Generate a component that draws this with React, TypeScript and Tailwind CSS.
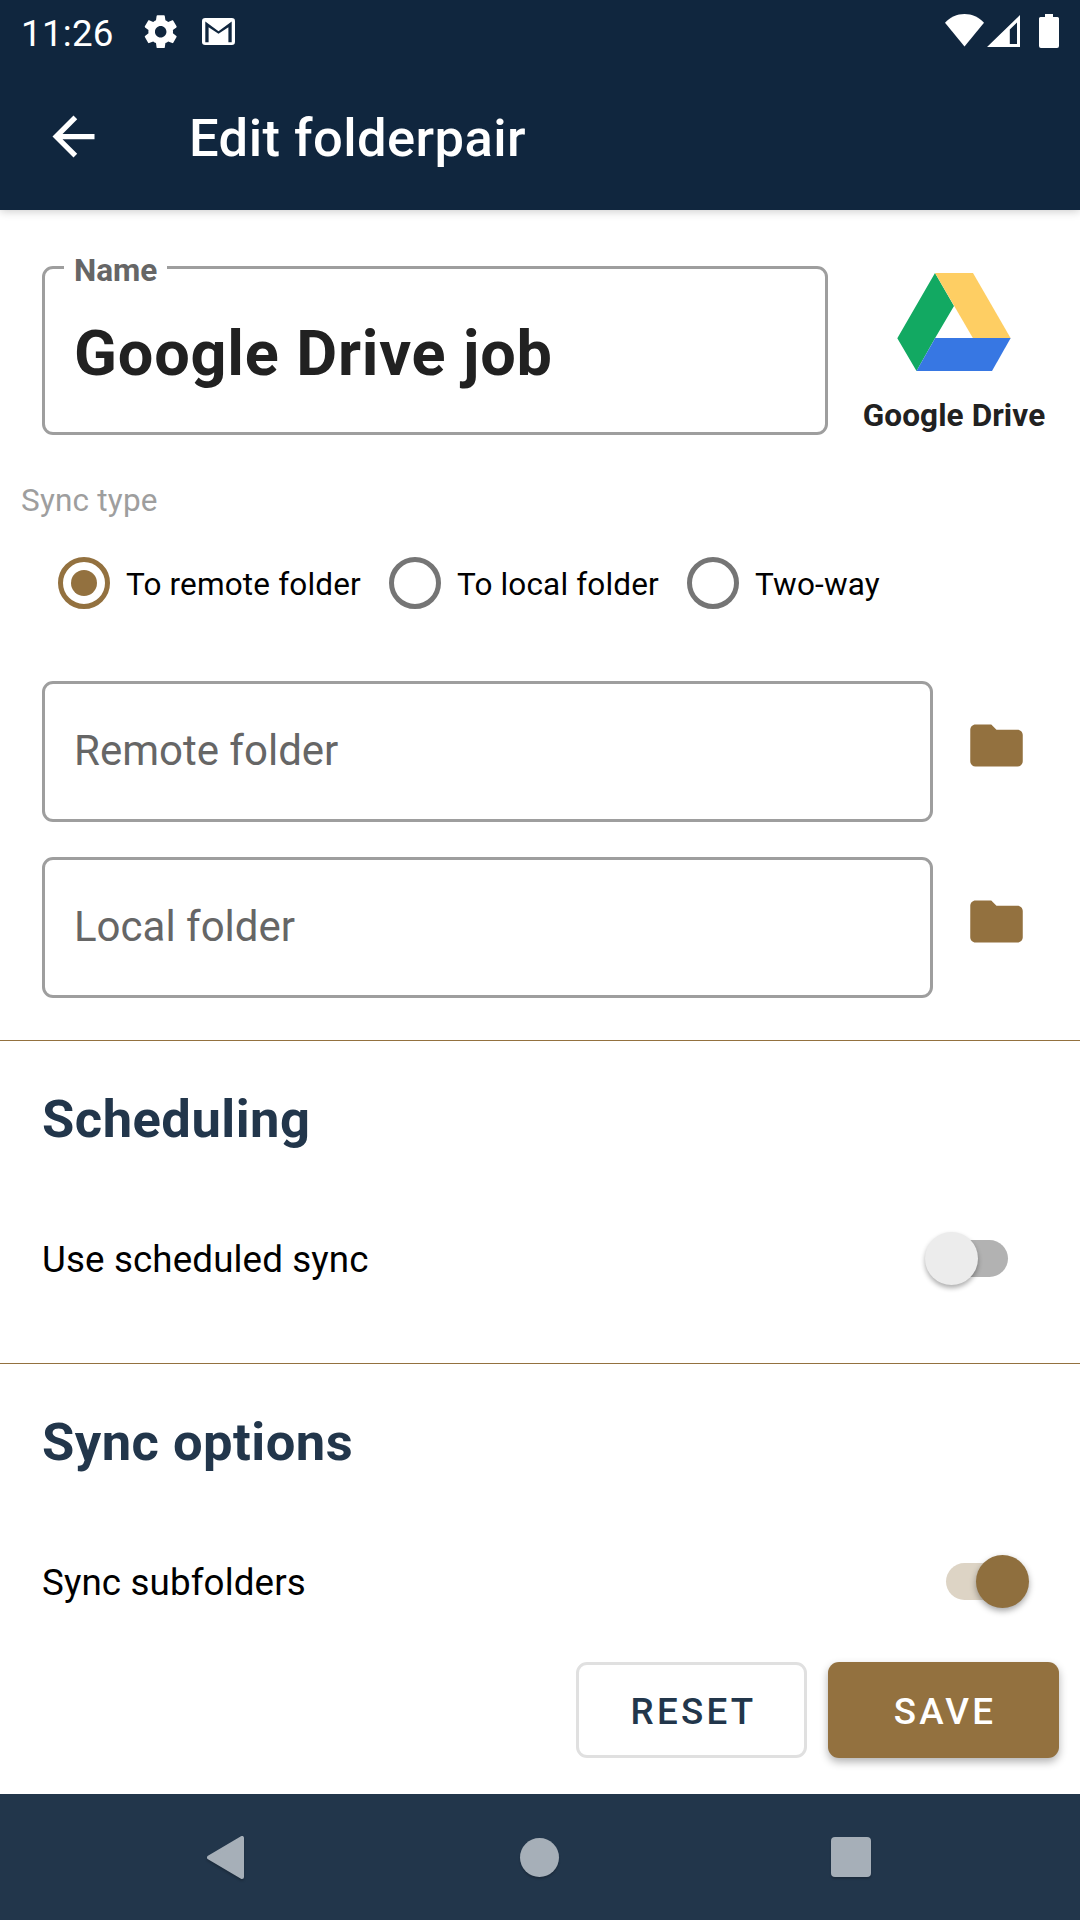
import React from "react";

function StatusBar() {
  return (
    <div className="flex h-[63px] items-start justify-between">
      <div className="flex">
        <span className="ml-[21px] mt-[2px] w-[120px] text-[36.75px] leading-[64px] tracking-[0.25px] text-white">11:26</span>
        <svg className="mt-[12px] size-[39.4px]" viewBox="0 0 24 24" fill="#fff">
          <path d="M19.43 12.98c.04-.32.07-.64.07-.98s-.03-.66-.07-.98l2.11-1.65c.19-.15.24-.42.12-.64l-2-3.46c-.12-.22-.39-.3-.61-.22l-2.49 1c-.52-.4-1.08-.73-1.69-.98l-.38-2.65C14.46 2.18 14.25 2 14 2h-4c-.25 0-.46.18-.49.42l-.38 2.65c-.61.25-1.17.59-1.69.98l-2.49-1c-.23-.09-.49 0-.61.22l-2 3.46c-.13.22-.07.49.12.64l2.11 1.65c-.04.32-.07.65-.07.98s.03.66.07.98l-2.11 1.65c-.19.15-.24.42-.12.64l2 3.46c.12.22.39.3.61.22l2.49-1c.52.4 1.08.73 1.69.98l.38 2.65c.03.24.24.42.49.42h4c.25 0 .46-.18.49-.42l.38-2.65c.61-.25 1.17-.59 1.69-.98l2.49 1c.23.09.49 0 .61-.22l2-3.46c.12-.22.07-.49-.12-.64l-2.11-1.65zM12 15.5c-1.93 0-3.5-1.57-3.5-3.5s1.57-3.5 3.5-3.5 3.5 1.57 3.5 3.5-1.57 3.5-3.5 3.5z" />
        </svg>
        <svg className="ml-[22px] mt-[18px] h-[27px] w-[33px]" viewBox="0 0 33 27">
          <rect width="33" height="27" rx="3.2" fill="#fff" />
          <path d="M3.300 24.200V3.600L16.500 13.300L29.700 3.600V24.200H26.400V9.200L16.500 15.800L6.600 9.200V24.200Z" fill="#10263e" />
          <path d="M6 3.300H27L16.500 11Z" fill="#fff" />
        </svg>
      </div>
      <div className="mr-[21px] mt-[14px] flex">
        <svg className="h-[33px] w-[39px]" viewBox="0 0 39 33" fill="#fff">
          <path d="M0 8.8C5.2 3.2 12 0 19.5 0S33.800 3.200 39 8.800L19.500 32.500Z" />
        </svg>
        <svg className="ml-[3px] mt-[1px] h-[32px] w-[33px]" viewBox="0 0 33 32" fill="#fff">
          <path fillRule="evenodd" d="M33 0V32H0ZM30 7.500L22.800 14.400V29H30Z" />
        </svg>
        <svg className="ml-[19px] h-[34px] w-[20px]" viewBox="0 0 20 34" fill="#fff">
          <path d="M6 0H14V3H18.500Q20 3 20 4.500V32Q20 34 18 34H2Q0 34 0 32V4.500Q0 3 1.500 3H6Z" />
        </svg>
      </div>
    </div>
  );
}

function Header() {
  return (
    <header className="z-10 h-[210px] bg-[#10263e] shadow-[0_1px_9px_rgba(0,0,0,0.22)]">
      <StatusBar />
      <div className="flex h-[147px] items-center pl-[42px]">
        <svg className="size-[63px]" viewBox="0 0 24 24" fill="#fff">
          <path d="M20 11H7.830l5.590-5.590L12 4l-8 8 8 8 1.410-1.410L7.830 13H20v-2z" />
        </svg>
        <h1 className="ml-[84px] pt-[2px] text-[52.5px] font-medium leading-[62px] tracking-[0.45px] text-white">Edit folderpair</h1>
      </div>
    </header>
  );
}

function DriveLogo() {
  return (
    <svg className="h-[98px] w-[114px]" viewBox="0 0 114 98">
      <path d="M38 0L57 33L38 65.300L19.500 98L0.300 65.300Z" fill="#12a962" />
      <path d="M38 0H76L113.700 65.300H76Z" fill="#fece63" />
      <path d="M38.200 65H113.700L95 98H19.500Z" fill="#3777e3" />
    </svg>
  );
}

function Radio({ label, checked = false, className }: { label: string; checked?: boolean; className: string }) {
  return (
    <label className={`flex items-center ${className}`}>
      <span
        className={`flex size-[52px] items-center justify-center rounded-full border-[5px] ${
          checked ? "border-[#93713f]" : "border-[#757575]"
        }`}
      >
        {checked && <span className="size-[26px] rounded-full bg-[#93713f]" />}
      </span>
      <span className="ml-[16px] whitespace-nowrap pt-[4px] text-[31.5px] leading-[38px] tracking-[0.16px] text-black">{label}</span>
    </label>
  );
}

function FolderField({ label, className }: { label: string; className: string }) {
  return (
    <div className={`flex h-[141px] ${className}`}>
      <div className="ml-[42px] flex w-[891px] items-center rounded-[11px] border-[3px] border-[#9e9e9e] pb-[2px] pl-[29px] text-[42px] leading-[50px] text-[#666]">
        <span>{label}</span>
      </div>
      <svg className="ml-[32px] mt-[33px] size-[63px]" viewBox="0 0 24 24" fill="#93713f">
        <path d="M10 4H4c-1.100 0-1.990.9-1.990 2L2 18c0 1.100.9 2 2 2h16c1.100 0 2-.9 2-2V8c0-1.100-.9-2-2-2h-8l-2-2z" />
      </svg>
    </div>
  );
}

function Switch({ on }: { on: boolean }) {
  return on ? (
    <span className="relative mr-[51px] flex h-[53px] w-[83px] items-center">
      <span className="h-[37px] w-[70px] rounded-full bg-[#ddd4c5]" />
      <span className="absolute right-0 size-[53px] rounded-full bg-[#8f6f3e] shadow-[0_3px_6px_rgba(0,0,0,0.35)]" />
    </span>
  ) : (
    <span className="relative mr-[72px] flex h-[53px] w-[83px] items-center justify-end">
      <span className="h-[37px] w-[70px] rounded-full bg-[#b2b2b2]" />
      <span className="absolute left-0 size-[53px] rounded-full bg-[#ececec] shadow-[0_3px_5px_rgba(0,0,0,0.32)]" />
    </span>
  );
}

function Section({ title, option, on }: { title: string; option: string; on: boolean }) {
  return (
    <section className="h-[323px] border-t border-[#93713f]">
      <h2 className="ml-[42px] mt-[47px] text-[52.5px] font-bold leading-[62px] tracking-[0.48px] text-[#22364b]">{title}</h2>
      <div className="mt-[82px] flex h-[53px] items-center justify-between pl-[42px]">
        <span className="pt-[3px] text-[36.75px] leading-[44px] tracking-[0.12px] text-black">{option}</span>
        <Switch on={on} />
      </div>
    </section>
  );
}

function NavBar() {
  return (
    <nav className="flex h-[126px] items-center justify-between bg-[#22364b] pl-[207px] pr-[209px]">
      <svg className="h-[43px] w-[38px] drop-shadow-[0_2px_1px_rgba(0,0,0,0.2)]" viewBox="0 0 38 43">
        <path d="M2 21.500L35 2V41Z" fill="#a6afb8" stroke="#a6afb8" strokeWidth="4" strokeLinejoin="round" />
      </svg>
      <span className="ml-[3px] size-[39px] rounded-full bg-[#a6afb8] shadow-[0_2px_2px_rgba(0,0,0,0.2)]" />
      <span className="h-[40px] w-[40px] rounded-[4px] bg-[#a6afb8] shadow-[0_2px_2px_rgba(0,0,0,0.2)]" />
    </nav>
  );
}

export default function App() {
  return (
    <div className="flex h-[1920px] w-[1080px] flex-col overflow-hidden bg-white font-[Roboto,sans-serif]">
      <Header />
      <main className="flex h-[1584px] flex-col overflow-hidden">
        <div className="mt-[56px] flex h-[169px]">
          <div className="relative ml-[42px] w-[786px] rounded-[11px] border-[3px] border-[#9e9e9e] pl-[29px] pt-[47px]">
            <span className="absolute left-[19px] top-[-17px] bg-white pl-[10px] pr-[10px] text-[31.5px] font-bold leading-[38px] text-[#666]">
              Name
            </span>
            <span className="block text-[63px] font-bold leading-[75px] tracking-[0.82px] text-[#212121]">Google Drive job</span>
          </div>
          <div className="ml-[21px] mt-[7px] flex w-[210px] flex-col items-center">
            <DriveLogo />
            <span className="mt-[26px] whitespace-nowrap text-[31.5px] font-bold leading-[38px] tracking-[0.1px] text-[#212121]">
              Google Drive
            </span>
          </div>
        </div>
        <div className="ml-[21px] mt-[47px] text-[31.5px] leading-[38px] tracking-[0.2px] text-[#9e9e9e]">Sync type</div>
        <div className="mt-[37px] flex h-[52px]">
          <Radio label="To remote folder" checked className="ml-[58px] w-[331px]" />
          <Radio label="To local folder" className="w-[298px]" />
          <Radio label="Two-way" className="" />
        </div>
        <FolderField label="Remote folder" className="mt-[72px]" />
        <FolderField label="Local folder" className="mt-[35px]" />
        <div className="mt-[42px]">
          <Section title="Scheduling" option="Use scheduled sync" on={false} />
          <Section title="Sync options" option="Sync subfolders" on />
        </div>
      </main>
      <div className="z-10 -mt-[132px] flex h-[132px] justify-end gap-[21px] pr-[21px]">
        <button className="h-[96px] w-[231px] rounded-[11px] border-[3px] border-[#e0e0e0] bg-white pl-[4px] pt-[3px] text-[36.75px] font-medium leading-[44px] tracking-[3.28px] text-[#22364b]">
          RESET
        </button>
        <button className="h-[96px] w-[231px] rounded-[11px] bg-[#93713f] pl-[3px] pt-[3px] text-[36.75px] font-medium leading-[44px] tracking-[3.28px] text-white shadow-[0_4px_8px_rgba(0,0,0,0.3)]">
          SAVE
        </button>
      </div>
      <NavBar />
    </div>
  );
}
